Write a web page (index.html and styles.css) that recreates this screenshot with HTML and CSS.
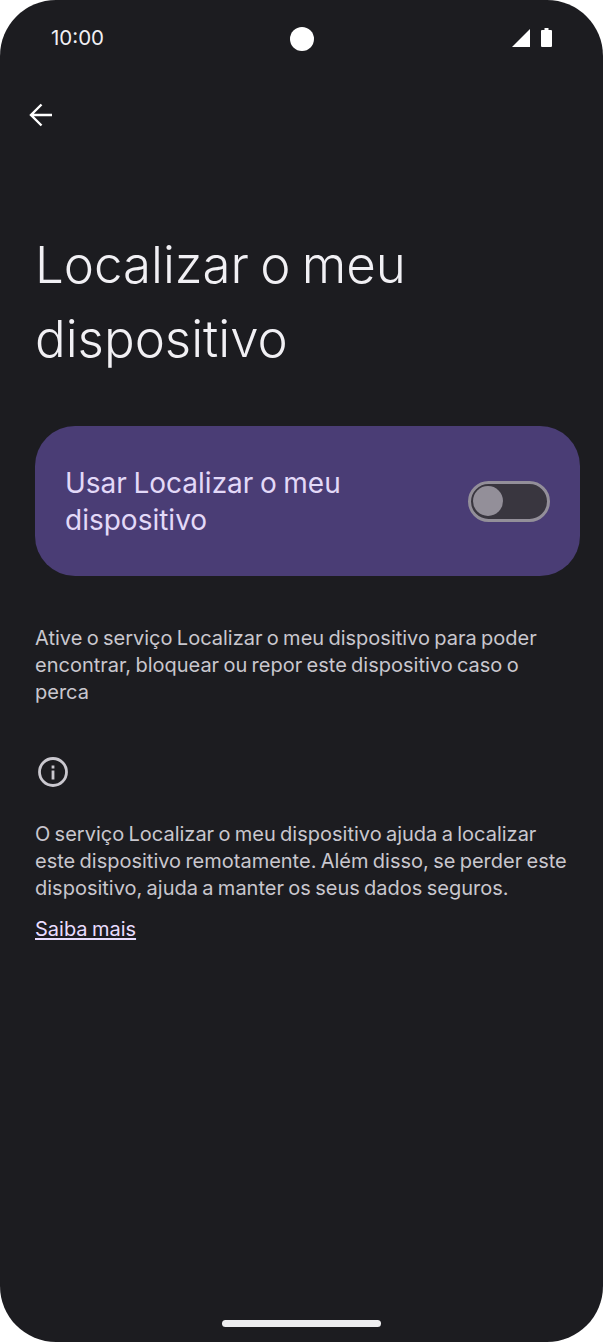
FILE: index.html
```html
<!DOCTYPE html>
<html lang="pt">
  <head>
    <meta charset="UTF-8" />
    <title>Localizar o meu dispositivo</title>
    <link rel="stylesheet" href="styles.css">
  </head>
  <body>
    <div class="screen">
      <div class="status-bar">
        <span class="clock">10:00</span>
        <span class="camera"></span>
        <span class="status-icons">
          <svg class="signal" width="18" height="18" viewBox="0 0 18 18"><path d="M18 0V18H0Z" fill="#fff"/></svg>
          <svg class="battery" width="11" height="19" viewBox="0 0 11 19"><path d="M3.5 0H7.500V2H10a1 1 0 0 1 1 1V18a1 1 0 0 1-1 1H1a1 1 0 0 1-1-1V3a1 1 0 0 1 1-1H3.500Z" fill="#fff"/></svg>
        </span>
      </div>

      <div class="toolbar">
        <svg class="back" width="24" height="24" viewBox="0 0 24 24"><path d="M23 12H2M12.500 1.500 2 12l10.500 10.500" fill="none" stroke="#fff" stroke-width="2.400"/></svg>
      </div>

      <h1 class="title">Localizar o meu dispositivo</h1>

      <div class="switch-card">
        <span class="switch-label">Usar Localizar o meu dispositivo</span>
        <span class="switch"><span class="thumb"></span></span>
      </div>

      <p class="desc">Ative o serviço Localizar o meu dispositivo para poder encontrar, bloquear ou repor este dispositivo caso o perca</p>

      <svg class="info" width="32" height="32" viewBox="0 0 32 32">
        <circle cx="16" cy="16" r="13.500" fill="none" stroke="#cac8cf" stroke-width="2.800"/>
        <rect x="14.600" y="14.500" width="2.800" height="9" fill="#cac8cf"/>
        <rect x="14.600" y="9.500" width="2.800" height="3" fill="#cac8cf"/>
      </svg>

      <p class="desc about">O serviço Localizar o meu dispositivo ajuda a localizar este dispositivo remotamente. Além disso, se perder este dispositivo, ajuda a manter os seus dados seguros.</p>
      <a class="more" href="#">Saiba mais</a>

      <div class="home-bar"></div>
    </div>
  </body>
</html>
```

FILE: styles.css
```css
html, body {
  margin: 0;
  height: 100%;
  background-color: #fff;
}

.screen {
  position: relative;
  box-sizing: border-box;
  width: 603px;
  height: 1342px;
  padding: 0 23px 0 35px;
  overflow: hidden;
  background-color: #1c1c20;
  border-radius: 56px;
  font-family: Inter, "Noto Sans", sans-serif;
  color: #c9c7ce;
}

.status-bar {
  display: flex;
  align-items: center;
  justify-content: space-between;
  height: 75px;
  margin-right: 28px;
  padding-left: 16px;
}

.clock {
  font-size: 20.500px;
  color: #f1f0f4;
}

/* hole punch sits on the screen centre, not in the flow */
.camera {
  position: absolute;
  left: 290px;
  top: 27px;
  width: 24px;
  height: 24px;
  border-radius: 50%;
  background-color: #fff;
}

.status-icons {
  display: flex;
  align-items: flex-end;
  gap: 11px;
}

.toolbar {
  display: flex;
  align-items: center;
  height: 79px;
  margin-left: -6px;
}

.title {
  margin: 74px 0 0;
  font-size: 51px;
  font-weight: 350;
  line-height: 74px;
  word-spacing: -3px;
  color: #f1f0f4;
}

.switch-card {
  display: flex;
  align-items: center;
  justify-content: space-between;
  box-sizing: border-box;
  height: 150px;
  margin-top: 50px;
  padding: 0 30px;
  background-color: #4a3d75;
  border-radius: 40px;
}

.switch-label {
  width: 340px;
  margin-top: 2px;
  font-size: 28px;
  line-height: 37px;
  word-spacing: -1.300px;
  color: #e3d9f8;
}

.switch {
  box-sizing: border-box;
  display: flex;
  align-items: center;
  width: 82px;
  height: 41px;
  padding: 0 2px;
  background-color: #39363f;
  border: 3px solid #938f99;
  border-radius: 21px;
}

.thumb {
  width: 30px;
  height: 30px;
  border-radius: 50%;
  background-color: #938f99;
}

.desc {
  max-width: 535px;
  margin: 49px 0 0;
  font-size: 20px;
  line-height: 27px;
  word-spacing: -1.300px;
}

.info {
  display: block;
  margin: 50px 0 0 1.500px;
}

.desc.about {
  margin-top: 33px;
}

.more {
  display: inline-block;
  margin-top: 14px;
  font-size: 20px;
  line-height: 27px;
  word-spacing: -1.300px;
  color: #e9ddff;
  text-decoration-thickness: 2px;
  text-underline-offset: 2px;
}

.home-bar {
  position: absolute;
  left: 222px;
  bottom: 15px;
  width: 159px;
  height: 7px;
  border-radius: 4px;
  background-color: #eeeef0;
}
```
